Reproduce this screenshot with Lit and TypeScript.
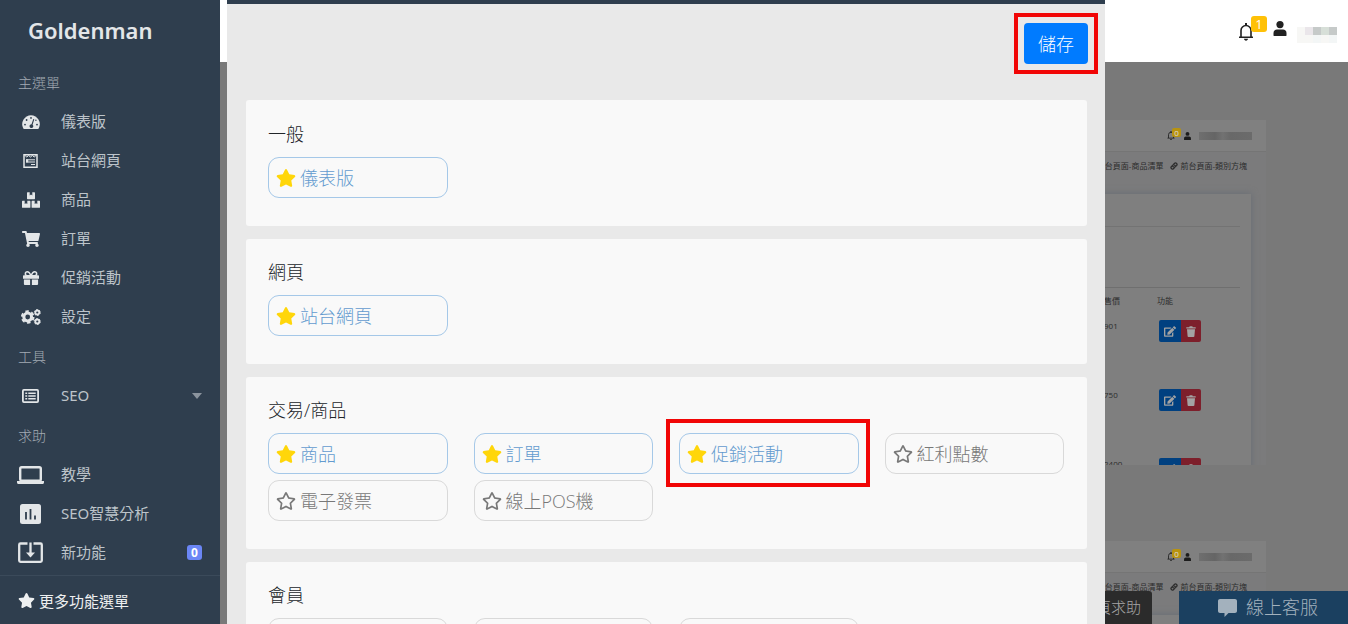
import { LitElement, html, svg, css, nothing } from "lit";
import { customElement, property } from "lit/decorators.js";

const STAR =
  "M259.3 17.8L194 150.2 47.9 171.5c-26.2 3.8-36.7 36.1-17.7 54.6l105.7 103-25 145.5c-4.5 26.3 23.2 46 46.4 33.7L288 439.6l130.7 68.7c23.2 12.2 50.9-7.4 46.4-33.7l-25-145.5 105.7-103c19-18.5 8.5-50.8-17.7-54.6L382 150.2 316.7 17.8c-11.7-23.6-45.6-23.9-57.4 0z";
const STAR_OUTLINE =
  "M528.1 171.5L382 150.2 316.7 17.8c-11.7-23.6-45.6-23.9-57.4 0L194 150.2 47.9 171.5c-26.2 3.8-36.7 36.1-17.7 54.6l105.7 103-25 145.5c-4.5 26.3 23.2 46 46.4 33.7L288 439.6l130.7 68.7c23.2 12.2 50.9-7.4 46.4-33.7l-25-145.5 105.7-103c19-18.5 8.5-50.8-17.7-54.6zM388.6 312.3l23.7 138.4L288 385.4l-124.3 65.3 23.7-138.4-100.6-98 139-20.2 62.2-126 62.2 126 139 20.2-100.6 98z";
const CART =
  "M528.12 301.319l47.273-208C578.806 78.301 567.391 64 551.99 64H159.208l-9.166-44.81C147.758 8.021 137.93 0 126.529 0H24C10.745 0 0 10.745 0 24v16c0 13.255 10.745 24 24 24h69.883l70.248 343.435C147.325 417.1 136 435.222 136 456c0 30.928 25.072 56 56 56s56-25.072 56-56c0-15.674-6.447-29.835-16.824-40h209.647C430.447 426.165 424 440.326 424 456c0 30.928 25.072 56 56 56s56-25.072 56-56c0-22.172-12.888-41.332-31.579-50.405l5.517-24.276c3.413-15.018-8.002-29.319-23.403-29.319H218.117l-6.545-32h293.145c11.206 0 20.92-7.754 23.403-18.681z";
const EDIT =
  "M402.6 83.2l90.2 90.2c3.8 3.8 3.8 10 0 13.8L274.4 405.6l-92.8 10.3c-12.4 1.4-22.9-9.1-21.5-21.5l10.3-92.8L388.8 83.2c3.8-3.8 10-3.8 13.8 0zm162-22.9l-48.8-48.8c-15.2-15.2-39.9-15.2-55.2 0l-35.4 35.4c-3.8 3.8-3.8 10 0 13.8l90.2 90.2c3.8 3.8 10 3.8 13.8 0l35.4-35.4c15.2-15.3 15.2-40 0-55.2zM384 346.2V448H64V128h229.8c3.2 0 6.2-1.3 8.5-3.5l40-40c7.6-7.6 2.2-20.5-8.5-20.5H48C21.5 64 0 85.5 0 112v352c0 26.5 21.5 48 48 48h352c26.5 0 48-21.5 48-48V306.2c0-10.7-12.9-16-20.5-8.5l-40 40c-2.2 2.3-3.5 5.3-3.5 8.5z";

interface Glyph {
  w: number;
  h: number;
  box: string;
  art: unknown;
}

const GLYPHS: Record<string, Glyph> = {
  star: { w: 20, h: 18, box: "0 0 576 512", art: svg`<path fill="currentColor" d=${STAR}/>` },
  starOutline: { w: 20, h: 18, box: "0 0 576 512", art: svg`<path fill="currentColor" d=${STAR_OUTLINE}/>` },
  cart: { w: 18, h: 16, box: "0 0 576 512", art: svg`<path fill="currentColor" d=${CART}/>` },
  edit: { w: 12, h: 11, box: "0 0 576 512", art: svg`<path fill="currentColor" d=${EDIT}/>` },
  gauge: {
    w: 18, h: 14, box: "0 0 18 14",
    art: svg`<path fill="currentColor" fill-rule="evenodd" d="M9 .3a8.9 8.9 0 0 0-7.7 13.2c.2.3.4.4.7.4h14c.3 0 .5-.1.7-.4A8.9 8.9 0 0 0 9 .3z"/>
      <g fill="#2f3e4e"><circle cx="9" cy="2.9" r=".9"/><circle cx="4.6" cy="5" r=".9"/><circle cx="3" cy="9.6" r=".9"/><circle cx="15" cy="9.6" r=".9"/><circle cx="13.9" cy="5.2" r=".7"/><path d="M11.3 4l1 .3-1.7 5.4a1.9 1.9 0 1 1-1.1-.4z"/></g>`,
  },
  form: {
    w: 15, h: 14, box: "0 0 15 14",
    art: svg`<path fill="none" stroke="currentColor" stroke-width="1.500" d="M1 .8h13v12.400H1z"/>
      <path fill="none" stroke="currentColor" stroke-width="1" d="M2 1.500l1.800 1.500 1.800-1.500L7.500 3l1.900-1.500L11.200 3 13 1.500M3 5.800h9M3 8h9M8 10.500h4"/>
      <path fill="currentColor" d="M3 5.400h2.200v3H3z"/>`,
  },
  boxes: {
    w: 18, h: 16, box: "0 0 18 16",
    art: svg`<path fill="currentColor" d="M5 .8c0-.4.2-.6.6-.6h2.1v3.2l1.3-.8 1.3.8V.2h2.1c.4 0 .6.2.6.6v5.8c0 .4-.2.6-.6.6H5.600c-.4 0-.6-.2-.6-.6zM0 9.400c0-.4.2-.6.6-.6h2.100V12l1.300-.8 1.300.8V8.800h2.500c.4 0 .6.2.6.6v5.800c0 .4-.2.6-.6.6H.6c-.4 0-.6-.2-.6-.6zM9.600 9.400c0-.4.2-.6.6-.6h2.500V12l1.300-.8 1.300.8V8.800h2.100c.4 0 .6.2.6.6v5.800c0 .4-.2.6-.6.6h-7.200c-.4 0-.6-.2-.6-.6z"/>`,
  },
  gift: {
    w: 16, h: 14, box: "0 0 16 14",
    art: svg`<path fill="none" stroke="currentColor" stroke-width="1.5" d="M8 4.700C6.800 2 5.600.8 4.300.8a1.950 1.950 0 0 0 0 3.900zM8 4.700C9.200 2 10.400.8 11.700.8a1.950 1.950 0 0 1 0 3.900z"/>
      <path fill="currentColor" d="M1 4.300h14c.6 0 1 .4 1 1v2.500H0V5.300c0-.6.4-1 1-1zM.9 8.600h6.200V14H1.800c-.5 0-.9-.4-.9-.9zM8.900 8.600h6.200v4.500c0 .5-.4.9-.9.9H8.900z"/>`,
  },
  cogs: {
    w: 20, h: 16, box: "0 0 20 16",
    art: svg`<g fill="none" stroke="currentColor">
      <circle cx="6.700" cy="8" r="3.900" stroke-width="3"/><circle cx="6.700" cy="8" r="5.800" stroke-width="2" stroke-dasharray="3.400 2.670"/>
      <circle cx="16.300" cy="3.500" r="2" stroke-width="1.800"/><circle cx="16.300" cy="3.500" r="3" stroke-width="1" stroke-dasharray="1.800 1.340"/>
      <circle cx="16.300" cy="12.500" r="2" stroke-width="1.800"/><circle cx="16.300" cy="12.500" r="3" stroke-width="1" stroke-dasharray="1.800 1.340"/></g>`,
  },
  list: {
    w: 17, h: 14, box: "0 0 17 14",
    art: svg`<rect x=".9" y=".9" width="15.200" height="12.200" rx="1" fill="none" stroke="currentColor" stroke-width="1.800"/>
      <path stroke="currentColor" stroke-width="1.400" d="M3.300 4.200h1.900M3.300 7h1.900M3.300 9.800h1.900M6.300 4.200h7.400M6.300 7h7.400M6.300 9.800h7.400"/>`,
  },
  laptop: {
    w: 27, h: 18, box: "0 0 27 18",
    art: svg`<rect x="3.200" y="1.200" width="20.600" height="13.500" rx="1.500" fill="none" stroke="currentColor" stroke-width="2.400"/>
      <path fill="currentColor" d="M0 15h27v1.500c0 .8-.6 1.500-1.500 1.500h-24C.6 18 0 17.300 0 16.500z"/>`,
  },
  stats: {
    w: 21, h: 20, box: "0 0 21 20",
    art: svg`<rect width="21" height="20" rx="2.500" fill="currentColor"/><path stroke="#2f3e4e" stroke-width="1.800" d="M6 8v7.500M10.500 5v10.500M15 11.500v4"/>`,
  },
  inbox: {
    w: 25, h: 21, box: "0 0 25 21",
    art: svg`<path fill="none" stroke="currentColor" stroke-width="2.300" d="M9.500 1.500H2.500c-.7 0-1.300.6-1.300 1.300v15.700c0 .7.600 1.300 1.300 1.300h20c.7 0 1.300-.6 1.300-1.300V2.800c0-.7-.6-1.300-1.300-1.300h-7M12.500.5V12"/>
      <path fill="currentColor" d="M8 10.500h9l-4.500 5z"/>`,
  },
  bell: {
    w: 16, h: 18, box: "0 0 16 18",
    art: svg`<path fill="none" stroke="currentColor" stroke-width="1.600" d="M1 14.300h14M3 14V7.500a5 5 0 0 1 10 0V14"/><path fill="currentColor" d="M7 0h2v3H7zM6 15.800h4c0 1-.9 1.900-2 1.900s-2-.9-2-1.900z"/>`,
  },
  person: {
    w: 13, h: 15, box: "0 0 13 15",
    art: svg`<circle cx="6.500" cy="3.600" r="3.600" fill="currentColor"/><path fill="currentColor" d="M0 14.500V12c0-2 1.500-3.400 3.500-3.400h6c2 0 3.500 1.400 3.500 3.400v2.500c0 .3-.2.5-.5.5H.5c-.3 0-.5-.2-.5-.5z"/>`,
  },
  chain: {
    w: 8, h: 8, box: "0 0 16 16",
    art: svg`<path fill="none" stroke="currentColor" stroke-width="2.600" stroke-linecap="round" d="M6.500 9.500a3 3 0 0 1 0-4.200l2.700-2.700a3 3 0 0 1 4.200 4.200L12 8.200M9.500 6.500a3 3 0 0 1 0 4.200l-2.700 2.700a3 3 0 0 1-4.200-4.200L4 7.800"/>`,
  },
  trash: {
    w: 10, h: 11, box: "0 0 10 11",
    art: svg`<path fill="currentColor" d="M.3 1.200h2.900l.5-.9h2.600l.5.900h2.900v1.300H.3zM1 3.200h8l-.6 7c0 .5-.4.8-.9.8h-5c-.5 0-.9-.3-.9-.8z"/>`,
  },
  bubble: {
    w: 19, h: 18, box: "0 0 19 18",
    art: svg`<path fill="currentColor" d="M2 0h15c1.100 0 2 .9 2 2v10c0 1.100-.9 2-2 2h-6.500l-4 4v-4H2c-1.100 0-2-.9-2-2V2C0 .9.900 0 2 0z"/>`,
  },
  caret: { w: 10, h: 6, box: "0 0 10 6", art: svg`<path fill="currentColor" d="M0 0h10L5 6z"/>` },
};

const glyph = (name: string, w?: number, h?: number) => {
  const g = GLYPHS[name];
  return html`<svg width=${w ?? g.w} height=${h ?? g.h} viewBox=${g.box} aria-hidden="true">${g.art}</svg>`;
};

const FONT = css`"Open Sans", "Noto Sans CJK TC", sans-serif`;
const NAV_FONT = css`"Noto Sans", "Noto Sans CJK TC", sans-serif`;

interface NavItem {
  icon: string;
  label: string;
  badge?: string;
  expandable?: boolean;
}

const NAV: { title: string; items: NavItem[] }[] = [
  {
    title: "主選單",
    items: [
      { icon: "gauge", label: "儀表版" },
      { icon: "form", label: "站台網頁" },
      { icon: "boxes", label: "商品" },
      { icon: "cart", label: "訂單" },
      { icon: "gift", label: "促銷活動" },
      { icon: "cogs", label: "設定" },
    ],
  },
  { title: "工具", items: [{ icon: "list", label: "SEO", expandable: true }] },
  {
    title: "求助",
    items: [
      { icon: "laptop", label: "教學" },
      { icon: "stats", label: "SEO智慧分析" },
      { icon: "inbox", label: "新功能", badge: "0" },
    ],
  },
];

@customElement("side-nav")
export class SideNav extends LitElement {
  static styles = css`
    :host {
      display: flex;
      flex-direction: column;
      flex: none;
      width: 220px;
      background: #2f3e4e;
      color: #bdc4ca;
      font-family: ${NAV_FONT};
      font-size: 15px;
    }
    svg { display: block; flex: none; }
    .brand {
      padding-left: 28px;
      font-size: 22px;
      font-weight: 600;
      line-height: 60px;
      color: #e3e6e8;
      text-decoration: none;
    }
    nav { padding-top: 2px; }
    .title {
      margin: 0;
      padding: 2px 0 0 18px;
      font-size: 14px;
      font-weight: 300;
      line-height: 38px;
      color: #a3abb3;
    }
    .item {
      display: flex;
      align-items: center;
      gap: 18px;
      height: 39px;
      padding: 0 18px;
      color: inherit;
      text-decoration: none;
    }
    .icon {
      display: flex;
      justify-content: center;
      width: 25px;
      color: #e3e6e8;
    }
    .label { flex: 1; padding-bottom: 2px; }
    .caret { color: #8b949e; }
    .badge {
      width: 15px;
      border-radius: 3px;
      background: #6b86f6;
      color: #fff;
      font-size: 12px;
      font-weight: 700;
      line-height: 15px;
      text-align: center;
    }
    .more {
      display: flex;
      align-items: center;
      gap: 4px;
      height: 48px;
      margin-top: auto;
      padding: 0 18px;
      border-top: 1px solid #3b4a5a;
      color: #eef0f1;
      text-decoration: none;
    }
  `;
  render() {
    return html`
      <a class="brand" href="#">Goldenman</a>
      <nav>
        ${NAV.map(
          (group) => html`
            <h2 class="title">${group.title}</h2>
            ${group.items.map(
              (item) => html`<a class="item" href="#">
                <span class="icon">${glyph(item.icon)}</span>
                <span class="label">${item.label}</span>
                ${item.expandable ? html`<span class="caret">${glyph("caret")}</span>` : nothing}
                ${item.badge ? html`<span class="badge">${item.badge}</span>` : nothing}
              </a>`,
            )}
          `,
        )}
      </nav>
      <a class="more" href="#">${glyph("star", 17, 15)}更多功能選單</a>
    `;
  }
}

@customElement("page-preview")
export class PagePreview extends LitElement {
  @property({ type: Array }) prices: string[] = [];
  static styles = css`
    :host {
      display: block;
      height: 345px;
      overflow: hidden;
      background: #7b7b7c;
      color: #2c2c2c;
      font-family: ${FONT};
      font-size: 8px;
      line-height: 12px;
    }
    svg { display: block; }
    .bar {
      display: flex;
      align-items: center;
      justify-content: flex-end;
      height: 32px;
      padding-right: 14px;
      background: #808080;
      border-bottom: 1px solid #757575;
      box-sizing: border-box;
      color: #1c1c1c;
    }
    .count {
      width: 9px;
      margin: 0 3px 6px -3px;
      border-radius: 2px;
      background: #b8930f;
      color: #ddd;
      line-height: 9px;
      text-align: center;
    }
    .name {
      width: 53px;
      height: 8px;
      margin-left: 8px;
      background: linear-gradient(90deg, #6f6f6f, #656565 30%, #727272 45%, #686868 60%, #6b6b6b);
    }
    .links {
      display: flex;
      justify-content: flex-end;
      gap: 7px;
      padding: 8px 19px 22px 0;
    }
    .link {
      display: flex;
      align-items: center;
      gap: 2px;
      color: inherit;
      text-decoration: none;
    }
    .card {
      margin-right: 15px;
      padding: 32px 11px 0 0;
      background: #7f7f7f;
      box-shadow: 0 0 7px #666c74;
      height: 320px;
    }
    .filters {
      height: 60px;
      border-top: 1px solid #737373;
      border-bottom: 1px solid #6f6f6f;
    }
    table { width: 100%; border-collapse: collapse; table-layout: fixed; }
    th { height: 26px; padding: 0; font-weight: 400; text-align: left; }
    td { height: 63px; padding: 6px 0 0; vertical-align: top; }
    .price { width: 53px; }
    .tools { width: 83px; }
    .group {
      display: flex;
      width: 42px;
      height: 22px;
      margin-left: 2px;
      overflow: hidden;
      border-radius: 2px;
    }
    .act {
      display: grid;
      place-items: center;
      flex: 1;
      padding: 0;
      border: 0;
      color: #a3a3a3;
    }
    .edit { background: #004080; flex: 0 0 22px; }
    .del { background: #7d1f2b; }
  `;
  render() {
    return html`
      <div class="bar">
        ${glyph("bell", 8, 9)}<span class="count">0</span>${glyph("person", 7, 8)}<span class="name"></span>
      </div>
      <div class="links">
        <a class="link" href="#">${glyph("chain")}前台頁面-商品清單</a>
        <a class="link" href="#">${glyph("chain")}前台頁面-類別方塊</a>
      </div>
      <div class="card">
        <div class="filters"></div>
        ${this.prices.length
          ? html`<table>
              <thead>
                <tr><th></th><th class="price">售價</th><th class="tools">功能</th></tr>
              </thead>
              <tbody>
                ${this.prices.map(
                  (price) => html`<tr>
                    <td></td>
                    <td>${price}</td>
                    <td>
                      <div class="group">
                        <button class="act edit" aria-label="編輯">${glyph("edit")}</button>
                        <button class="act del" aria-label="刪除">${glyph("trash")}</button>
                      </div>
                    </td>
                  </tr>`,
                )}
              </tbody>
            </table>`
          : nothing}
      </div>
    `;
  }
}

interface Feature {
  label: string;
  on?: boolean;
  marked?: boolean;
}

const GROUPS: { title: string; features: Feature[] }[] = [
  { title: "一般", features: [{ label: "儀表版", on: true }] },
  { title: "網頁", features: [{ label: "站台網頁", on: true }] },
  {
    title: "交易/商品",
    features: [
      { label: "商品", on: true },
      { label: "訂單", on: true },
      { label: "促銷活動", on: true, marked: true },
      { label: "紅利點數" },
      { label: "電子發票" },
      { label: "線上POS機" },
    ],
  },
  { title: "會員", features: [{ label: "" }, { label: "" }, { label: "" }] },
];

@customElement("feature-panel")
export class FeaturePanel extends LitElement {
  static styles = css`
    :host {
      display: block;
      box-sizing: border-box;
      overflow: hidden;
      border-top: 4px solid #2f3e4e;
      background: #e9e9e9;
      font-family: ${FONT};
      font-size: 18px;
      font-weight: 300;
    }
    svg { display: block; flex: none; }
    .top {
      display: flex;
      justify-content: flex-end;
      padding: 9px 7px 26px;
    }
    .frame { padding: 6px; border: 4px solid #f10606; }
    .save {
      display: block;
      width: 64px;
      height: 41px;
      padding: 0 0 2px;
      border: 0;
      border-radius: 4px;
      background: #007bff;
      color: #fff;
      font: inherit;
    }
    .groups {
      display: flex;
      flex-direction: column;
      gap: 13px;
      padding: 0 18px 0 19px;
    }
    .card {
      padding: 20px 23px 28px 22px;
      border-radius: 3px;
      background: #f9f9f9;
    }
    .card:first-child { padding-top: 21px; }
    .title {
      margin: 0 0 9px;
      font-size: 18px;
      font-weight: 300;
      line-height: 27px;
      color: #212529;
    }
    .grid {
      display: grid;
      grid-template-columns: repeat(4, 1fr);
      gap: 6px 26px;
    }
    .feature {
      position: relative;
      display: flex;
      align-items: center;
      gap: 4px;
      height: 41px;
      padding: 0 7px;
      border: 1px solid #d9d9d9;
      border-radius: 11px;
      background: none;
      color: #787878;
      font: inherit;
    }
    .label { padding-bottom: 2px; }
    .on { border-color: #a5c8e8; color: #639bcf; }
    .on svg { color: #ffd60a; }
    .marked::after {
      content: "";
      position: absolute;
      inset: -15px -12px -14px -14px;
      border: 4px solid #f10606;
    }
  `;
  render() {
    return html`
      <div class="top"><div class="frame"><button class="save">儲存</button></div></div>
      <div class="groups">
        ${GROUPS.map(
          (g) => html`<section class="card">
            <h3 class="title">${g.title}</h3>
            <div class="grid">
              ${g.features.map(
                (f) => html`<button
                  class="feature ${f.on ? "on" : ""} ${f.marked ? "marked" : ""}"
                  aria-pressed=${f.on ? "true" : "false"}
                >
                  ${glyph(f.on ? "star" : "starOutline")}<span class="label">${f.label}</span>
                </button>`,
              )}
            </div>
          </section>`,
        )}
      </div>
    `;
  }
}

@customElement("app-root")
export class AppRoot extends LitElement {
  static styles = css`
    :host {
      display: flex;
      height: 100vh;
      overflow: hidden;
      font-family: ${FONT};
    }
    svg { display: block; flex: none; }
    .main {
      position: relative;
      display: flex;
      flex: 1;
      flex-direction: column;
      min-width: 0;
      overflow: hidden;
      background: #797979;
    }
    .header {
      display: flex;
      align-items: center;
      justify-content: flex-end;
      flex: none;
      height: 62px;
      padding-right: 11px;
      background: #fff;
      color: #212121;
    }
    .bell { position: relative; margin: 2px 19px 0 0; }
    .count {
      position: absolute;
      left: 13px;
      top: -7px;
      width: 16px;
      border-radius: 3px;
      background: #ffc107;
      color: #fff;
      font-size: 13px;
      line-height: 16px;
      text-align: center;
    }
    .person { margin-bottom: 6px; }
    .user {
      display: grid;
      grid-template-columns: repeat(5, 8px);
      grid-auto-rows: 8px;
      margin: 8px 0 0 10px;
    }
    .c0 { background: #f7f7f5; }
    .c1 { background: #eae6ea; }
    .c2 { background: #c6cac9; }
    .c3 { background: #d7dfd8; }
    .c4 { background: #f3f6f6; }
    .content {
      display: flex;
      flex-direction: column;
      gap: 76px;
      padding: 58px 82px 0 7px;
    }
    .panel {
      position: absolute;
      inset: 0 243px 0 7px;
    }
    .dock {
      position: absolute;
      right: 0;
      bottom: 0;
      display: flex;
      gap: 27px;
    }
    .help {
      height: 33px;
      padding: 0 11px;
      border: 0;
      border-radius: 3px 3px 0 0;
      background: #2b2b2b;
      color: #a6a6a6;
      font: 300 15px/33px ${FONT};
    }
    .chat {
      display: flex;
      align-items: center;
      gap: 9px;
      height: 33px;
      padding: 0 30px 0 39px;
      border: 0;
      background: #1b4060;
      color: #a3b1bd;
      font: 300 18px/33px ${FONT};
    }
  `;
  render() {
    return html`
      <side-nav></side-nav>
      <main class="main">
        <header class="header">
          <div class="bell">${glyph("bell")}<span class="count">1</span></div>
          <div class="person">${glyph("person", 14, 15)}</div>
          <div class="user">
            ${[0, 1, 2, 3, 2, 0, 0, 4, 0, 4].map((c) => html`<span class="c${c}"></span>`)}
          </div>
        </header>
        <div class="content">
          <page-preview .prices=${["901", "750", "2400"]}></page-preview>
          <page-preview></page-preview>
        </div>
        <div class="dock">
          <button class="help">本頁求助</button>
          <button class="chat">${glyph("bubble")}線上客服</button>
        </div>
        <feature-panel class="panel"></feature-panel>
      </main>
    `;
  }
}
